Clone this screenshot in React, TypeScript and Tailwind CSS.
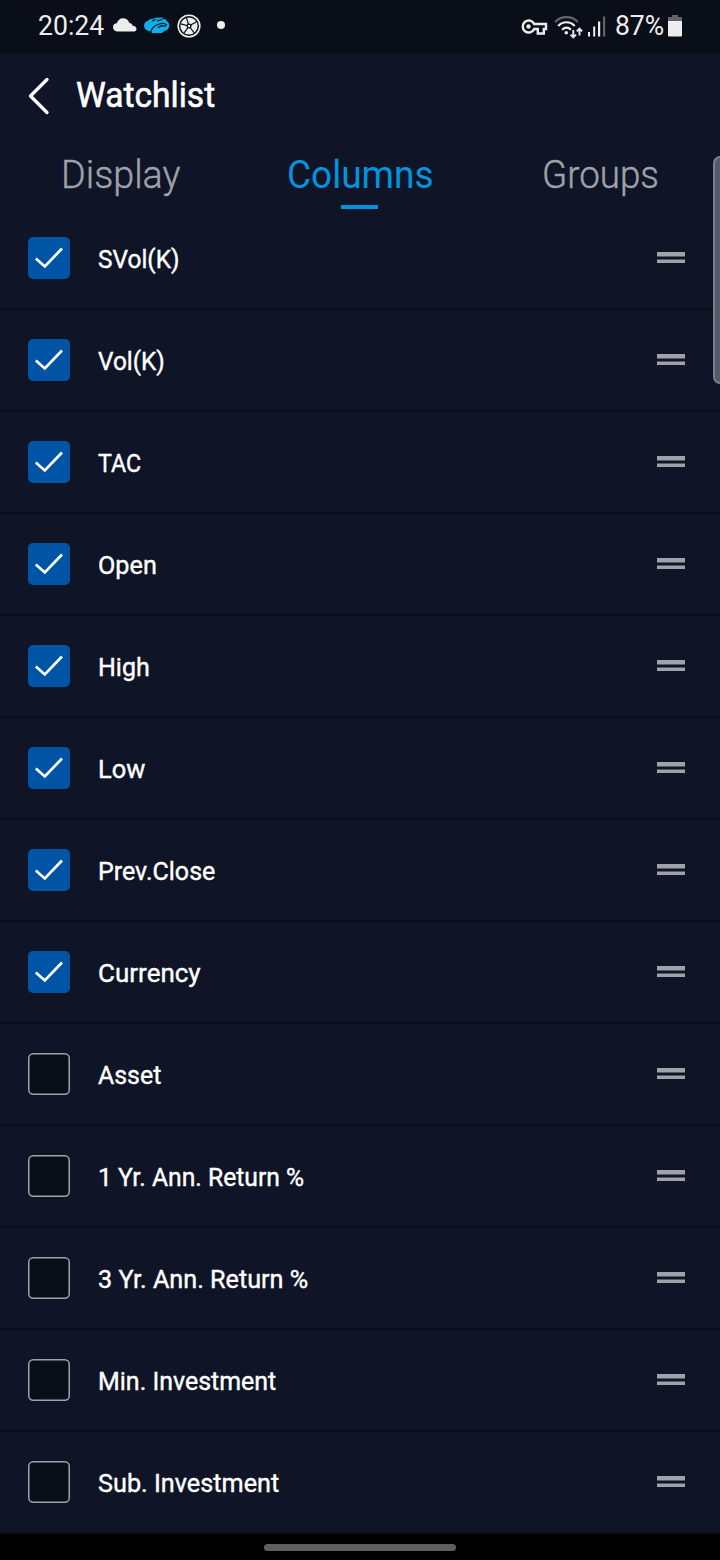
import { useLayoutEffect, useRef, useState } from "react";

type FitTextProps = { text: string; width: number; className: string };

// Condenses a single line of text horizontally to the given width.
function FitText({ text, width, className }: FitTextProps) {
  const ref = useRef<HTMLSpanElement>(null);
  const [scale, setScale] = useState(1);
  useLayoutEffect(() => {
    if (ref.current) setScale(width / ref.current.offsetWidth);
  }, [text, width]);
  return (
    <span className="block shrink-0" style={{ width }}>
      <span
        ref={ref}
        className={`inline-block origin-left whitespace-nowrap ${className}`}
        style={{ transform: `scaleX(${scale})` }}
      >
        {text}
      </span>
    </span>
  );
}

const columns = [
  { label: "SVol(K)", width: 82, checked: true },
  { label: "Vol(K)", width: 67, checked: true },
  { label: "TAC", width: 43, checked: true },
  { label: "Open", width: 59, checked: true },
  { label: "High", width: 52, checked: true },
  { label: "Low", width: 47, checked: true },
  { label: "Prev.Close", width: 117, checked: true },
  { label: "Currency", width: 103, checked: true },
  { label: "Asset", width: 63, checked: false },
  { label: "1 Yr. Ann. Return %", width: 206, checked: false },
  { label: "3 Yr. Ann. Return %", width: 210, checked: false },
  { label: "Min. Investment", width: 178, checked: false },
  { label: "Sub. Investment", width: 181, checked: false },
];

function StatusBar() {
  return (
    <div className="flex h-[53px] shrink-0 items-center bg-[#0a0e18] text-[#ededed]">
      <div className="ml-[38px]">
        <FitText text="20:24" width={66} className="text-[27px] leading-[53px]" />
      </div>
      <svg className="mb-[3px] ml-[9px]" width="24" height="16" viewBox="0 0 24 16">
        <path
          d="M4.5 15a4 4 0 0 1-.6-8.2C4.6 3.8 7 1.8 10 1.8c3.2 0 5.5 1.8 6.3 4.8 1.8.1 3 1.1 3.4 2.8 2.2.1 3.8 1.5 3.8 3.2 0 1.5-.9 2.4-2.5 2.4z"
          transform="translate(0 -.6)"
          fill="currentColor"
        />
      </svg>
      <svg className="mb-[2px] ml-[7px]" width="26" height="18" viewBox="0 0 26 18">
        <path
          d="M6.5 14.5C2.2 13.8 0 11.5 0 8.5 0 6 2.2 4 4.5 3.5L6 2l3.5-.3L11 .8 19.5.5 18 2l3.5.3 3.5 4.2.3 3-1.6 3-3.7 1.7-2 1.8-9.5.2-1.5-1.2C8 12 10 9.5 13 7.7c-3.3 1-5.7 3.5-6.5 6.8z"
          fill="#0cb0e9"
        />
        <path
          d="M6.5 15.5c1-4 4-7 8.7-8.5 3-.9 6-.6 7.3.8l-1.5 1.4-3-.6-4 1.9M8 4l4-1.5M13 4l5-1.5"
          fill="none"
          stroke="#0a0e18"
          strokeWidth="1.2"
        />
      </svg>
      <svg className="mb-px ml-[7px]" width="24" height="24" viewBox="0 0 24 24">
        <circle cx="12" cy="12" r="10.8" fill="none" stroke="currentColor" strokeWidth="1.6" />
        <circle cx="12" cy="12" r="8.6" fill="currentColor" />
        <path
          d="M12 12 9.5 3.8M12 12l7.5-4.2M12 12l5.2 6.8M12 12l-4.8 6.8M12 12 3.7 9.8"
          stroke="#0a0e18"
          strokeWidth="1.2"
        />
        <circle cx="12" cy="12" r="2.5" fill="#0a0e18" />
        <circle cx="12" cy="12" r="1.2" fill="currentColor" />
      </svg>
      <div className="mb-[3px] ml-[16px] size-2 rounded-full bg-[#ededed]" />
      <svg className="ml-auto" width="27" height="18" viewBox="0 0 27 18">
        <path
          d="M13.2 6H25v5h-2.2v4.5h-6V11h-3.6a6 6 0 1 1 0-5z"
          fill="none"
          stroke="currentColor"
          strokeWidth="2.4"
        />
        <circle cx="7.5" cy="8.5" r="2.2" fill="currentColor" />
      </svg>
      <svg className="ml-[6px]" width="30" height="24" viewBox="0 0 30 24">
        <g fill="none" stroke="currentColor" strokeWidth="2.2">
          <path d="M1.2 7C7 .6 18 .6 23.8 7" className="opacity-40" />
          <path d="M4.2 11c4.5-5 12-5 16.5 0" />
          <path d="M8 14.8c2.8-2.6 6.2-2.6 9 0" />
        </g>
        <circle cx="12.3" cy="17.8" r="1.8" fill="currentColor" />
        <path
          d="M19.3 15v7M16.6 19.6l2.7 2.7 2.7-2.7M25.5 20.5v-7M22.8 16.3l2.7-2.7 2.7 2.7"
          fill="none"
          stroke="currentColor"
          strokeWidth="1.9"
        />
      </svg>
      <svg className="ml-[3px]" width="19" height="21" viewBox="0 0 19 21">
        <path d="M1 16h2v4.5H1zM6.2 10.5h2v10h-2zM11 5.5h2.2v15H11z" fill="currentColor" />
        <path d="M16 .5h2.2v20H16z" fill="#60636a" />
      </svg>
      <div className="ml-[9px]">
        <FitText text="87%" width={49} className="text-[27px] leading-[53px]" />
      </div>
      <svg className="mb-[2px] ml-[4px] mr-[38px]" width="14" height="22" viewBox="0 0 14 22">
        <path d="M4 0h6v2h4v4H0V2h4z" fill="#60636a" />
        <path d="M0 6h14v14.5a1 1 0 0 1-1 1H1a1 1 0 0 1-1-1z" fill="currentColor" />
      </svg>
    </div>
  );
}

function CheckBox({ checked }: { checked: boolean }) {
  if (!checked) {
    return (
      <svg className="shrink-0" width="42" height="42" viewBox="0 0 42 42">
        <rect x=".75" y=".75" width="40.5" height="40.5" rx="4.5" fill="#0a0e18" stroke="#a0a2aa" strokeWidth="1.5" />
      </svg>
    );
  }
  return (
    <div className="size-[42px] shrink-0 rounded-[5px] bg-[#0054a6]">
      <svg width="42" height="42" viewBox="0 0 42 42">
        <path d="M7.8 21.5 16.8 29.5 34 11.5" fill="none" stroke="white" strokeWidth="2.7" />
      </svg>
    </div>
  );
}

export default function App() {
  return (
    <div className="relative flex h-[1560px] w-[720px] flex-col overflow-hidden bg-[#0f1426] font-['Roboto',sans-serif]">
      <StatusBar />
      <header className="flex h-[85px] shrink-0 items-center">
        <svg className="ml-[28px]" width="22" height="38" viewBox="0 0 22 38">
          <path d="M19 2.5 2.5 19 19 35.5" fill="none" stroke="white" strokeWidth="3.3" strokeLinecap="round" strokeLinejoin="round" />
        </svg>
        <div className="ml-[26px]">
          <FitText
            text="Watchlist"
            width={139}
            className="text-[35px] leading-[86px] text-white [-webkit-text-stroke:0.6px_white]"
          />
        </div>
      </header>
      <nav className="grid h-[70px] shrink-0 grid-cols-3 text-[38px] leading-[74px]">
        <div className="flex h-[70px] justify-center">
          <FitText
            text="Display"
            width={119}
            className="font-light text-[#a0a2aa] [-webkit-text-stroke:0.4px_#a0a2aa]"
          />
        </div>
        <div className="relative flex h-[70px] justify-center">
          <FitText text="Columns" width={147} className="text-[#0095de]" />
          <div className="absolute -bottom-px left-[101px] h-1 w-[37px] bg-[#0095de]" />
        </div>
        <div className="flex h-[70px] justify-center">
          <FitText
            text="Groups"
            width={117}
            className="font-light text-[#a0a2aa] [-webkit-text-stroke:0.4px_#a0a2aa]"
          />
        </div>
      </nav>
      <main className="flex flex-col">
        {columns.map(({ label, width, checked }) => (
          <div key={label} className="flex h-[102px] items-center border-b-2 border-[#0b0e1a] pr-[35px] pl-[28px]">
            <CheckBox checked={checked} />
            <div className="mt-[2px] ml-[27.5px]">
              <FitText
                text={label}
                width={width}
                className="text-[26.5px] leading-[40px] text-white [-webkit-text-stroke:0.4px_white]"
              />
            </div>
            <svg className="ml-auto" width="28" height="12" viewBox="0 0 28 12">
              <path d="M0 0h28v4H0zM0 8h28v3H0z" fill="#a0a2aa" />
              <path d="M0 4h28v1H0zM0 7h28v1H0z" fill="#585b67" />
            </svg>
          </div>
        ))}
      </main>
      <footer className="flex h-[26px] items-center justify-center bg-black">
        <div className="h-[7px] w-48 rounded-full bg-[#5e5e5e]" />
      </footer>
      <div className="absolute top-[156px] right-0 h-[228px] w-[7px] rounded-l-[7px] border-y-2 border-l-2 border-[#7d7f88] bg-[#575a68]" />
    </div>
  );
}
